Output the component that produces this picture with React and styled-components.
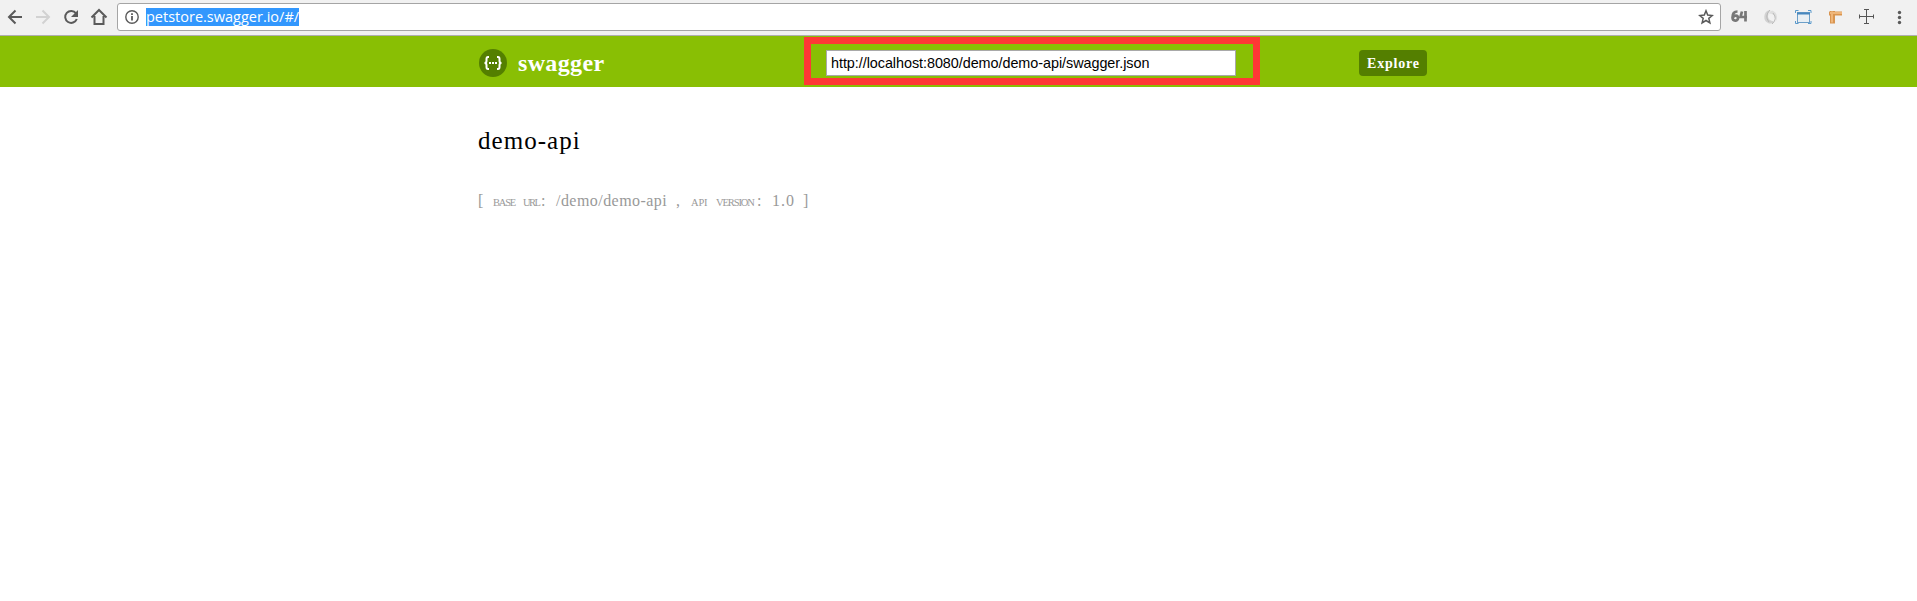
import React from 'react';
import styled, { createGlobalStyle } from 'styled-components';

const Global = createGlobalStyle`
  * { box-sizing: border-box; }
  body { margin: 0; background: #fff; overflow: hidden; }
`;
const Page = styled.div`
  height: 601px;
  font-family: "Liberation Serif", serif;
`;
const BrowserBar = styled.div`
  height: 36px;
  background: #f1f1f1;
  border-bottom: 1px solid #b0aeb0;
  display: flex;
  align-items: flex-start;
`;
const NavIcons = styled.div`
  width: 117px;
  height: 35px;
  flex: none;
`;
const Omnibox = styled.div`
  width: 1604px;
  height: 28px;
  margin-top: 3px;
  border: 1px solid #a5a5a5;
  border-radius: 3px;
  background: #fff;
  display: flex;
  align-items: center;
  padding: 0 6px 0 7px;
`;
const Address = styled.span`
  margin-left: 7px;
  width: 153px;
  height: 18px;
  line-height: 17px;
  background: #3297fd;
  color: #fff;
  font-family: "Open Sans", sans-serif;
  font-size: 14.5px;
  white-space: nowrap;
`;
const Spacer = styled.div`flex: 1;`;
const Extensions = styled.div`
  width: 196px;
  height: 35px;
  flex: none;
`;
const Header = styled.header`
  height: 51px;
  background: #89bf04;
  display: flex;
  align-items: flex-start;
  padding-left: 478px;
`;
const Brand = styled.div`
  width: 326px;
  height: 51px;
  display: flex;
`;
const BrandName = styled.span`
  margin-left: 11px;
  line-height: 28px;
  padding-top: 13px;
  color: #fff;
  font-weight: 700;
  font-size: 24px;
  letter-spacing: 0.35px;
`;
const Highlight = styled.div`
  width: 456px;
  height: 48px;
  margin-top: 1px;
  border: 7px solid #fe3835;
  padding: 6px 0 0 15px;
`;
const UrlInput = styled.div`
  width: 410px;
  height: 26px;
  border: 1px solid #a9a9a9;
  background: #fff;
  color: #000;
  padding-left: 4px;
  line-height: 25px;
  font-family: "Liberation Sans", sans-serif;
  font-size: 14.4px;
  letter-spacing: -0.05px;
`;
const ExploreButton = styled.div`
  margin: 14px 0 0 99px;
  width: 68px;
  height: 26px;
  border-radius: 4px;
  background: #547f00;
  color: #fff;
  font-weight: 700;
  font-size: 14px;
  line-height: 27px;
  padding-left: 8px;
  letter-spacing: 0.8px;
`;
const Content = styled.main`padding: 38px 0 0 478px;`;
const Title = styled.h1`
  margin: 0;
  font-weight: 400;
  font-size: 25px;
  line-height: 31px;
  letter-spacing: 1.05px;
  color: #000;
`;
const Info = styled.h4`
  margin: 33px 0 0;
  display: flex;
  align-items: baseline;
  font-weight: 400;
  font-size: 16px;
  line-height: 24px;
  color: #999;
  white-space: pre;
`;
const Piece = styled.span`
  width: ${(p) => p.$w}px;
  flex: none;
  letter-spacing: ${(p) => p.$track || 0}px;
`;
const Label = styled(Piece)`
  font-size: 10.5px;
`;

const NavigationIcons = () => (
  <svg width="117" height="35" fill="none" stroke="#5a5a5a" strokeWidth="2">
    <path d="M22 17H9M15.500 10.500L9 17l6.500 6.500" />
    <path d="M36 17h13M42.500 10.500L49 17l-6.500 6.500" stroke="#d2d2d2" />
    <path d="M76 13.300a6 6 0 1 0 .8 5.700" />
    <path d="M78 10v7h-7z" fill="#5a5a5a" stroke="none" />
    <path d="M91.500 17.500L99 10l7.500 7.500M94.500 16v8h9v-8" />
  </svg>
);
const InfoIcon = () => (
  <svg width="14" height="14" viewBox="0 0 14 14" fill="none" stroke="#5a5a5a">
    <circle cx="7" cy="7" r="6.200" strokeWidth="1.400" />
    <path d="M7 6v4.500M7 3.300v1.700" strokeWidth="1.800" />
  </svg>
);
const StarIcon = () => (
  <svg width="16" height="16" viewBox="0 0 16 16" fill="none" stroke="#5a5a5a" strokeWidth="1.500">
    <path d="M8 1.800l1.700 4.300 4.600.4-3.500 2.900 1.100 4.500L8 11.500l-3.900 2.400 1.100-4.500-3.500-2.900 4.600-.4z" />
  </svg>
);
const ExtensionIcons = () => (
  <svg width="196" height="35" fill="none">
    <g stroke="#777" strokeWidth="2.700">
      <path d="M16.500 11.500c-4 0-5 3-5 6 0 4 5.500 4 5.500.5 0-3-4-3-5-.5" />
      <path d="M21 11.500l-1.500 5.500h6.500M24.500 11v10.500" />
    </g>
    <path d="M49 10a7 7 0 0 0-1 13.500q4 .5 5-2-6-1-6-5t2-6.500" fill="#d2d2d2" />
    <path d="M51 10.500a7 7 0 0 1 1 13q5-2 2-7-2-3-6-3 0-2 3-3" fill="#dedede" />
    <path d="M49 10q-6 6-1 12M51 24q6-5 1-11" stroke="#b9b9b9" />
    <rect x="76.500" y="12.500" width="12" height="10" fill="#e8eff4" stroke="#6c9fc8" />
    <path d="M76 13.500h13" stroke="#4687be" strokeWidth="2" />
    <path d="M74.500 13v-2.500h3M87 10.500h3V13M74.500 21v2.500h3M87 23.500h3V21" stroke="#5b9acc" />
    <path d="M108 13.500h13" stroke="#d99550" strokeWidth="4" />
    <path d="M111.500 11v12.500" stroke="#d99550" strokeWidth="5" />
    <path d="M109 13h12M111 11.500v11" stroke="#efb67a" strokeWidth="2" />
    <path d="M138 16.500h15M145.500 9v15M138.500 14.500v4M152.500 14.500v4M143 9.500h5M143 23.500h5" stroke="#555" />
    <g fill="#5a5a5a"><circle cx="178.500" cy="12.500" r="1.700" /><circle cx="178.500" cy="17.500" r="1.700" /><circle cx="178.500" cy="22.500" r="1.700" /></g>
  </svg>
);
const SwaggerIcon = () => (
  <svg width="29" height="51" viewBox="0 0 29 51" fill="none">
    <circle cx="15" cy="27" r="14" fill="#547f00" />
    <path d="M11 21h-1Q8.500 21 8.500 23v2q0 2-2 2 2 0 2 2v2q0 2 1.500 2h1M19 21h1q1.500 0 1.500 2v2q0 2 2 2-2 0-2 2v2q0 2-1.500 2h-1" stroke="#fff" strokeWidth="2" />
    <path d="M11 27h2M14 27h2M17 27h2" stroke="#fff" strokeWidth="2" />
  </svg>
);

export default function App() {
  return (
    <Page>
      <Global />
      <BrowserBar>
        <NavIcons><NavigationIcons /></NavIcons>
        <Omnibox><InfoIcon /><Address>petstore.swagger.io/#/</Address><Spacer /><StarIcon /></Omnibox>
        <Extensions><ExtensionIcons /></Extensions>
      </BrowserBar>
      <Header>
        <Brand><SwaggerIcon /><BrandName>swagger</BrandName></Brand>
        <Highlight><UrlInput>http://localhost:8080/demo/demo-api/swagger.json</UrlInput></Highlight>
        <ExploreButton>Explore</ExploreButton>
      </Header>
      <Content>
        <Title>demo-api</Title>
        <Info>
          <Piece $w={15}>[</Piece>
          <Label $w={30} $track={-1.2}>BASE</Label>
          <Label $w={18} $track={-1.6}>URL</Label>
          <Piece $w={15}>:</Piece>
          <Piece $w={120} $track={0.45}>/demo/demo-api</Piece>
          <Piece $w={15}>,</Piece>
          <Label $w={25} $track={-0.2}>API</Label>
          <Label $w={41} $track={-1.1}>VERSION</Label>
          <Piece $w={15}>:</Piece>
          <Piece $w={31} $track={1}>1.0</Piece>
          <Piece $w={8}>]</Piece>
        </Info>
      </Content>
    </Page>
  );
}
